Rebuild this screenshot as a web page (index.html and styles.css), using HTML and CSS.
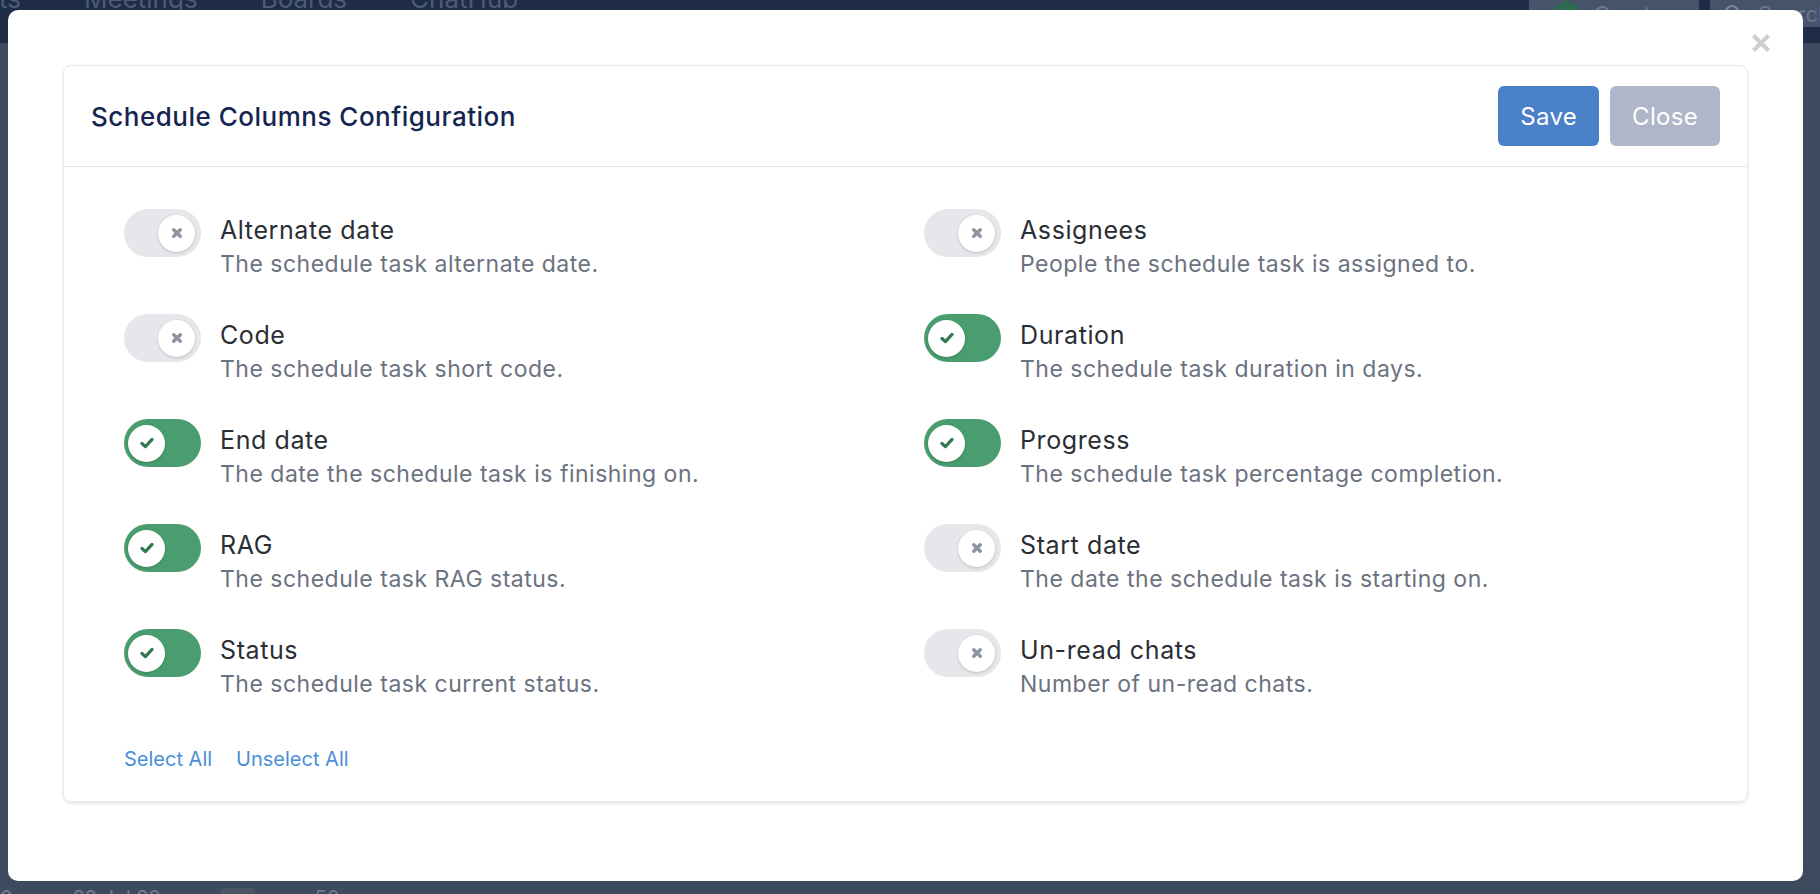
FILE: index.html
```html
<!doctype html>
<html lang="en">
<head>
<meta charset="UTF-8">
<meta name="viewport" content="width=device-width, initial-scale=1">
<title>Schedule Columns Configuration</title>
<link rel="stylesheet" href="styles.css">
</head>
<body>

<!-- app underneath the overlay -->
<div class="app">
    <div class="topbar">
        <nav class="topnav">
            <span>ts</span>
            <span>Meetings</span>
            <span>Boards</span>
            <span>ChatHub</span>
        </nav>
        <div class="topbar-actions">
            <div class="create-btn"><span class="create-dot"></span>Create</div>
            <div class="search-box">
                <svg width="20" height="20" viewBox="0 0 20 20"><circle cx="8" cy="8" r="6" fill="none" stroke="#7c879b" stroke-width="2"/><path d="M12.5 12.5 L18 18" stroke="#7c879b" stroke-width="2"/></svg>
                Search
            </div>
        </div>
    </div>
    <div class="app-main">
        <div class="grid-row">
            <span>0</span>
            <span>22 Jul 22</span>
            <span class="cell-box"></span>
            <span>50</span>
        </div>
    </div>
</div>

<div class="modal">
    <button class="modal-x" aria-label="Close">
        <svg width="20" height="20" viewBox="0 0 20 20"><path d="M2.5 2.5 L17.5 17.5 M17.5 2.5 L2.5 17.5" stroke="#cfcfcf" stroke-width="4.2"/></svg>
    </button>

    <div class="card">
        <div class="card-header">
            <h2 class="card-title">Schedule Columns Configuration</h2>
            <div class="card-actions">
                <button class="btn btn-save">Save</button>
                <button class="btn btn-close">Close</button>
            </div>
        </div>

        <div class="card-body">
            <div class="columns" id="columns"></div>
            <div class="bulk-links">
                <a href="#" id="select-all">Select All</a>
                <a href="#" id="unselect-all">Unselect All</a>
            </div>
        </div>
    </div>
</div>

<script>
    // left column first, then right column (grid fills row by row)
    const columns = [
        { name: "Alternate date", desc: "The schedule task alternate date.", on: false },
        { name: "Assignees", desc: "People the schedule task is assigned to.", on: false },
        { name: "Code", desc: "The schedule task short code.", on: false },
        { name: "Duration", desc: "The schedule task duration in days.", on: true },
        { name: "End date", desc: "The date the schedule task is finishing on.", on: true },
        { name: "Progress", desc: "The schedule task percentage completion.", on: true },
        { name: "RAG", desc: "The schedule task RAG status.", on: true },
        { name: "Start date", desc: "The date the schedule task is starting on.", on: false },
        { name: "Status", desc: "The schedule task current status.", on: true },
        { name: "Un-read chats", desc: "Number of un-read chats.", on: false },
    ];

    const checkIcon = '<svg width="16" height="16" viewBox="0 0 14 14"><path d="M2.6 7.4 L5.6 10.2 L11.4 3.9" fill="none" stroke="#2f7a4f" stroke-width="2.8" stroke-linecap="round" stroke-linejoin="round"/></svg>';
    const crossIcon = '<svg width="14" height="14" viewBox="0 0 12 12"><path d="M3.2 3.2 L8.8 8.8 M8.8 3.2 L3.2 8.8" fill="none" stroke="#8d94a2" stroke-width="3" stroke-linecap="round"/></svg>';

    const list = document.getElementById("columns");

    function render() {
        list.innerHTML = "";
        columns.forEach((col, i) => {
            const row = document.createElement("div");
            row.className = "column-item";
            row.innerHTML =
                '<button class="switch' + (col.on ? ' is-on' : '') + '">' +
                    '<span class="knob">' + (col.on ? checkIcon : crossIcon) + '</span>' +
                '</button>' +
                '<div class="column-text">' +
                    '<div class="column-name">' + col.name + '</div>' +
                    '<div class="column-desc">' + col.desc + '</div>' +
                '</div>';
            row.querySelector(".switch").addEventListener("click", () => {
                columns[i].on = !columns[i].on;
                render();
            });
            list.appendChild(row);
        });
    }

    document.getElementById("select-all").addEventListener("click", (e) => {
        e.preventDefault();
        columns.forEach(c => c.on = true);
        render();
    });
    document.getElementById("unselect-all").addEventListener("click", (e) => {
        e.preventDefault();
        columns.forEach(c => c.on = false);
        render();
    });

    render();
</script>
</body>
</html>
```

FILE: styles.css
```css
* {
    box-sizing: border-box;
}

body {
    margin: 0;
    width: 1820px;
    height: 894px;
    overflow: hidden;
    font-family: Inter, "Noto Sans", sans-serif;
    background: #3e4a5e;
}

button {
    font-family: inherit;
    border: none;
    cursor: pointer;
}

/* ---------- app behind the overlay ---------- */
.app {
    display: flex;
    flex-direction: column;
    height: 894px;
}

.topbar {
    height: 43px;
    background: #1f2c45;
    display: flex;
    justify-content: space-between;
    align-items: flex-start;
    flex-shrink: 0;
}

.topnav {
    display: flex;
    gap: 63px;
    margin-top: -17px;
    margin-left: -1px;
    font-size: 26px;
    color: #4d5b76;
}

.topbar-actions {
    display: flex;
    gap: 11px;
    margin-right: -40px;
}

.create-btn,
.search-box {
    height: 27px;
    background: #47536a;
    display: flex;
    align-items: center;
    gap: 14px;
    color: #6b778d;
    font-size: 22px;
}

.create-btn {
    width: 170px;
    padding-left: 25px;
}

.create-dot {
    width: 26px;
    height: 26px;
    border-radius: 50%;
    background: #2e6a53;
}

.search-box {
    width: 150px;
    padding-left: 14px;
}

.app-main {
    flex: 1;
    display: flex;
    flex-direction: column;
    justify-content: flex-end;
}

.grid-row {
    height: 6px;
    display: flex;
    gap: 60px;
    align-items: flex-start;
    color: #6f7b8f;
    font-size: 20px;
    line-height: 20px;
}

.cell-box {
    width: 34px;
    height: 20px;
    background: #4c5565;
    border-radius: 4px;
}

/* ---------- modal ---------- */
.modal {
    position: fixed;
    left: 8px;
    top: 10px;
    width: 1795px;
    height: 871px;
    background: #fff;
    border-radius: 10px;
    padding: 55px;
}

.modal-x {
    position: absolute;
    top: 23px;
    right: 32px;
    padding: 0;
    background: none;
    line-height: 0;
}

.card {
    height: 737px;
    border: 1px solid #e6e8ed;
    border-radius: 8px;
    box-shadow: 0 2px 3px rgba(30, 40, 70, 0.1);
    display: flex;
    flex-direction: column;
}

.card-header {
    height: 101px;
    flex-shrink: 0;
    padding: 0 27px;
    display: flex;
    justify-content: space-between;
    align-items: center;
    border-bottom: 1px solid #e3e5ea;
}

.card-title {
    margin: 0;
    font-size: 26px;
    letter-spacing: 0.5px;
    font-weight: 500;
    color: #142550;
}

.card-actions {
    display: flex;
    gap: 11px;
}

.btn {
    height: 60px;
    padding: 0 22px;
    border-radius: 6px;
    font-size: 24px;
    letter-spacing: 0.3px;
    color: #fff;
}

.btn-save {
    background: #4a81c8;
}

.btn-close {
    background: #b0b6c9;
}

.card-body {
    padding: 42px 60px 0;
}

.columns {
    display: grid;
    grid-template-columns: 1fr 1fr;
    column-gap: 37px;
    row-gap: 33px;
}

.column-item {
    display: flex;
    gap: 19px;
    align-items: flex-start;
}

/* toggle switch: knob sits right when off, left when on */
.switch {
    width: 77px;
    height: 48px;
    border-radius: 24px;
    background: #e5e7eb;
    padding: 0 6px;
    display: flex;
    align-items: center;
    justify-content: flex-end;
    flex-shrink: 0;
}

.switch.is-on {
    background: #4a9d6f;
    justify-content: flex-start;
    padding: 0 4px;
}

.knob {
    width: 37px;
    height: 37px;
    border-radius: 50%;
    background: #fff;
    box-shadow: 0 1px 3px rgba(0, 0, 0, 0.18);
    display: flex;
    align-items: center;
    justify-content: center;
}

.column-text {
    padding-top: 5px;
}

.column-name {
    font-size: 25px;
    letter-spacing: 0.6px;
    line-height: 33px;
    color: #2a2e35;
}

.column-desc {
    font-size: 23px;
    letter-spacing: 0.5px;
    line-height: 34px;
    color: #6b7280;
}

.bulk-links {
    margin-top: 44px;
    display: flex;
    gap: 24px;
    font-size: 20px;
    line-height: 28px;
}

.bulk-links a {
    color: #4a8fd8;
    text-decoration: none;
}
```
